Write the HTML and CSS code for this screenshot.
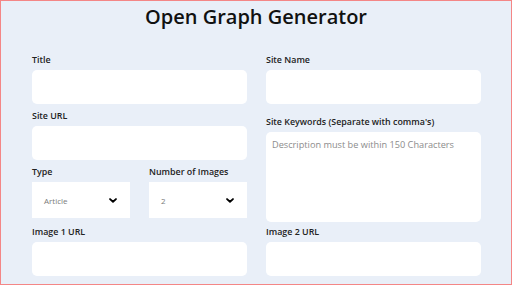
FILE: index.html
```html
<!DOCTYPE html>
<html lang="en">
<head>
<meta charset="utf-8">
<title>Open Graph Generator</title>
<link rel="stylesheet" href="styles.css">
</head>
<body>
<main class="page">
  <h1 class="heading">Open Graph Generator</h1>
  <form class="form">
    <div class="col">
      <div class="field">
        <label class="label">Title</label>
        <input class="input" type="text">
      </div>
      <div class="field">
        <label class="label">Site URL</label>
        <input class="input" type="text">
      </div>
      <div class="select-row">
        <div class="field">
          <label class="label">Type</label>
          <div class="select"><span class="select-value">Article</span>
            <svg class="chev" viewBox="0 0 10 6" width="8" height="5"><path d="M1.3 1.2 L5 4.6 L8.7 1.2" fill="none" stroke="#000" stroke-width="2.3" stroke-linecap="round" stroke-linejoin="round"/></svg>
          </div>
        </div>
        <div class="field">
          <label class="label">Number of Images</label>
          <div class="select"><span class="select-value">2</span>
            <svg class="chev" viewBox="0 0 10 6" width="8" height="5"><path d="M1.3 1.2 L5 4.6 L8.7 1.2" fill="none" stroke="#000" stroke-width="2.3" stroke-linecap="round" stroke-linejoin="round"/></svg>
          </div>
        </div>
      </div>
      <div class="field">
        <label class="label">Image 1 URL</label>
        <input class="input" type="text">
      </div>
    </div>
    <div class="col">
      <div class="field">
        <label class="label">Site Name</label>
        <input class="input" type="text">
      </div>
      <div class="field field-keywords">
        <label class="label">Site Keywords (Separate with comma's)</label>
        <textarea class="textarea" placeholder="Description must be within 150 Characters"></textarea>
      </div>
      <div class="field">
        <label class="label">Image 2 URL</label>
        <input class="input" type="text">
      </div>
    </div>
  </form>
</main>
</body>
</html>
```

FILE: styles.css
```css
* { box-sizing: border-box; }
html, body { margin: 0; padding: 0; }
body {
  font-family: "Open Sans", "Noto Sans", sans-serif;
  background: #e9eff8;
}
.page {
  height: 285px;
  border: 1px solid #f48686;
  overflow: hidden;
}
.heading {
  margin: 0;
  padding-top: 2px;
  text-align: center;
  font-size: 20px;
  line-height: 27px;
  font-weight: 600;
  letter-spacing: 0;
  color: #111;
}
.form {
  display: flex;
  gap: 19px;
  padding: 24px 0 0 31px;
}
.col {
  width: 215px;
  display: flex;
  flex-direction: column;
}
.field {
  display: flex;
  flex-direction: column;
  margin-bottom: 6px;
}
.label {
  font-size: 8.9px;
  line-height: 12px;
  font-weight: 600;
  color: #222;
  margin-bottom: 4px;
}
.input {
  height: 34px;
  border: none;
  border-radius: 5px;
  background: #fff;
  font: inherit;
  outline: none;
}
.select-row {
  display: flex;
  gap: 19px;
  margin-bottom: 2px;
}
.select-row .field { width: 98px; }
.select {
  height: 36px;
  background: #fff;
  display: flex;
  align-items: center;
  justify-content: space-between;
  padding: 0 13px 0 12px;
}
.select-value {
  font-size: 8px;
  color: #7a7a7a;
}
.chev { display: block; }
.field-keywords { margin-top: 6px; margin-bottom: 4px; }
.textarea {
  height: 90px;
  border: none;
  border-radius: 5px;
  background: #fff;
  resize: none;
  padding: 6px 6px;
  font-family: "Open Sans", "Noto Sans", sans-serif;
  font-size: 9.2px;
  line-height: 14px;
  color: #333;
  outline: none;
}
.textarea::placeholder { color: #8c8c8c; }
```
